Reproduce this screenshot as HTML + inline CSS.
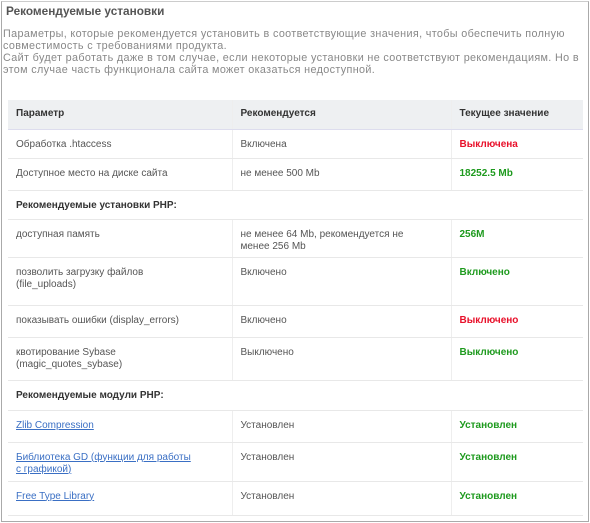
<!DOCTYPE html>
<html><head><meta charset="utf-8"><style>
body{margin:0;width:590px;height:523px;background:#fff;font-family:"Liberation Sans",Arial,sans-serif;overflow:hidden}
.box{position:absolute;left:1px;top:1px;width:586px;height:519px;border:1px solid #aaa;border-top-color:#ccc}
h1{position:absolute;left:6px;top:4px;margin:0;font-size:11.8px;color:#555;font-weight:bold}
.intro{position:absolute;left:3px;top:28px;width:590px;font-size:10.8px;line-height:12px;color:#888;letter-spacing:0.35px;white-space:nowrap}
table{position:absolute;left:8px;top:100px;width:575px;border-collapse:collapse;font-size:10px;line-height:12px;color:#555}
td{border-bottom:1px solid #e8e8e8;vertical-align:top;padding:9px 8px 0 8px;box-sizing:border-box}
td+td{border-left:1px solid #eee}
tr.h td{background:#eef0f2;font-weight:bold;color:#333;vertical-align:middle;padding-top:0;border-bottom:1px solid #dde}
tr.s td{font-weight:bold;color:#333;border-left:none}
.r{color:#e8102a;font-weight:bold}.g{color:#1e9a1e;font-weight:bold}
a{color:#3a6fc4;text-decoration:underline}
</style></head><body>
<div class="box"></div>
<h1>Рекомендуемые установки</h1>
<div class="intro">Параметры, которые рекомендуется установить в соответствующие значения, чтобы обеспечить полную<br>совместимость с требованиями продукта.<br>Сайт будет работать даже в том случае, если некоторые установки не соответствуют рекомендациям. Но в<br>этом случае часть функционала сайта может оказаться недоступной.</div>
<table>
<colgroup><col style="width:224px"><col style="width:219px"><col></colgroup>
<tr class="h" style="height:29px"><td>Параметр</td><td>Рекомендуется</td><td>Текущее значение</td></tr>
<tr style="height:29px"><td>Обработка .htaccess</td><td>Включена</td><td class="r">Выключена</td></tr>
<tr style="height:32px"><td>Доступное место на диске сайта</td><td>не менее 500 Mb</td><td class="g">18252.5 Mb</td></tr>
<tr class="s" style="height:29px"><td colspan="3">Рекомендуемые установки PHP:</td></tr>
<tr style="height:38px"><td>доступная память</td><td>не менее 64 Mb, рекомендуется не<br>менее 256 Mb</td><td class="g">256M</td></tr>
<tr style="height:48px"><td>позволить загрузку файлов<br>(file_uploads)</td><td>Включено</td><td class="g">Включено</td></tr>
<tr style="height:32px"><td>показывать ошибки (display_errors)</td><td>Включено</td><td class="r">Выключено</td></tr>
<tr style="height:43px"><td>квотирование Sybase<br>(magic_quotes_sybase)</td><td>Выключено</td><td class="g">Выключено</td></tr>
<tr class="s" style="height:30px"><td colspan="3">Рекомендуемые модули PHP:</td></tr>
<tr style="height:32px"><td><a>Zlib Compression</a></td><td>Установлен</td><td class="g">Установлен</td></tr>
<tr style="height:39px"><td><a>Библиотека GD (функции для работы<br>с графикой)</a></td><td>Установлен</td><td class="g">Установлен</td></tr>
<tr style="height:34px"><td><a>Free Type Library</a></td><td>Установлен</td><td class="g">Установлен</td></tr>
</table>
</body></html>
